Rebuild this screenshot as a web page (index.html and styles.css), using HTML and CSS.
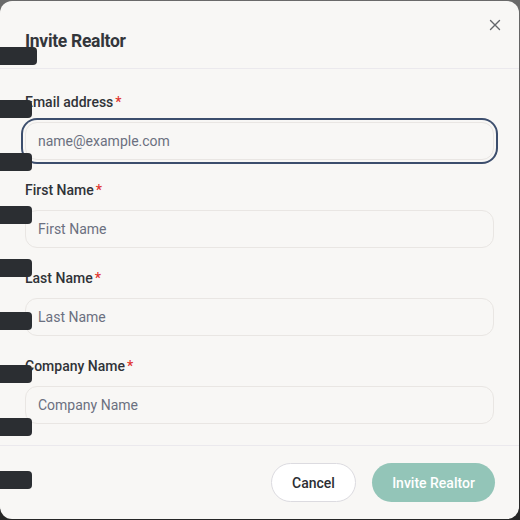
FILE: index.html
```html
<!DOCTYPE html>
<html lang="en">
<head>
<meta charset="utf-8">
<title>Invite Realtor</title>
<link rel="stylesheet" href="styles.css">
</head>
<body>
<div class="modal">
  <header class="modal-header">
    <h2 class="title">Invite Realtor</h2>
    <button class="close" type="button" aria-label="Close">
      <svg width="12" height="12" viewBox="0 0 12 12"><path d="M1.5 1.5 L10.5 10.5 M10.5 1.5 L1.5 10.5" stroke="#63666b" stroke-width="1.4" stroke-linecap="round" fill="none"/></svg>
    </button>
  </header>
  <form class="modal-body">
    <div class="field">
      <label class="label">Email address<span class="req">*</span></label>
      <input class="input focused" type="email" placeholder="name@example.com">
    </div>
    <div class="field">
      <label class="label">First Name<span class="req">*</span></label>
      <input class="input" type="text" placeholder="First Name">
    </div>
    <div class="field">
      <label class="label">Last Name<span class="req">*</span></label>
      <input class="input" type="text" placeholder="Last Name">
    </div>
    <div class="field">
      <label class="label">Company Name<span class="req">*</span></label>
      <input class="input" type="text" placeholder="Company Name">
    </div>
  </form>
  <footer class="modal-footer">
    <button class="btn btn-cancel" type="button">Cancel</button>
    <button class="btn btn-primary" type="button">Invite Realtor</button>
  </footer>
</div>
<div class="tabs">
  <span class="tab tab-wide"></span>
  <span class="tab"></span>
  <span class="tab"></span>
  <span class="tab"></span>
  <span class="tab"></span>
  <span class="tab"></span>
  <span class="tab"></span>
  <span class="tab"></span>
  <span class="tab"></span>
</div>
</body>
</html>
```
FILE: styles.css
```css
* { box-sizing: border-box; }
html, body { margin: 0; padding: 0; }
body {
  width: 520px;
  height: 520px;
  background: linear-gradient(180deg, #6a6a6a 0%, #3a3a3a 60%, #262626 100%);
  font-family: Roboto, "Liberation Sans", Arial, sans-serif;
  color: #2f3237;
  overflow: hidden;
  position: relative;
}
.modal {
  width: 519px;
  height: 518px;
  margin-top: 1px;
  background: #f8f7f5;
  border-radius: 12px;
  display: flex;
  flex-direction: column;
}
.modal-header {
  height: 68px;
  padding: 0 16px 0 25px;
  border-bottom: 1px solid #ebe9ed;
  display: flex;
  align-items: flex-start;
  justify-content: space-between;
}
.title {
  margin: 29px 0 0;
  font-size: 17.5px;
  font-weight: 700;
  line-height: 22px;
  color: #33363b;
  letter-spacing: -0.3px;
}
.close {
  margin-top: 16px;
  width: 16px;
  height: 16px;
  padding: 0;
  border: none;
  background: none;
  display: flex;
  align-items: center;
  justify-content: center;
}
.modal-body {
  margin: 0;
  padding: 23px 25px 21px;
  display: flex;
  flex-direction: column;
  gap: 20px;
  border-bottom: 1px solid #ebe9ed;
}
.field {
  display: flex;
  flex-direction: column;
  gap: 10px;
}
.label {
  font-size: 14px;
  font-weight: 500;
  line-height: 20px;
  color: #303338;
}
.req {
  color: #e0342f;
  margin-left: 2px;
}
.input {
  height: 38px;
  width: 100%;
  border: 1px solid #e9e6e3;
  border-radius: 12px;
  background: #f8f7f5;
  padding: 0 12px;
  font-family: Roboto, "Liberation Sans", Arial, sans-serif;
  font-size: 14px;
  color: #2f3237;
  outline: none;
}
.input::placeholder { color: #6b7080; }
.input.focused {
  box-shadow: 0 0 0 2px #f8f7f5, 0 0 0 4px #3c4e6d;
}
.modal-footer {
  padding: 17px 24px 16px;
  display: flex;
  justify-content: flex-end;
  gap: 16px;
}
.btn {
  height: 39px;
  border-radius: 20px;
  font-family: Roboto, "Liberation Sans", Arial, sans-serif;
  font-size: 14px;
  font-weight: 500;
  padding: 0;
}
.btn-cancel {
  width: 85px;
  background: #ffffff;
  border: 1px solid #dcdbe0;
  color: #2b2e33;
}
.btn-primary {
  width: 123px;
  background: #93c5b8;
  border: none;
  color: #ffffff;
}
.tabs {
  position: absolute;
  left: 0;
  top: 47px;
  display: flex;
  flex-direction: column;
  align-items: flex-start;
  gap: 35px;
}
.tab {
  display: block;
  width: 32px;
  height: 18px;
  background: #2b2e32;
  border-radius: 0 4px 4px 0;
}
.tab-wide { width: 37px; }
```
